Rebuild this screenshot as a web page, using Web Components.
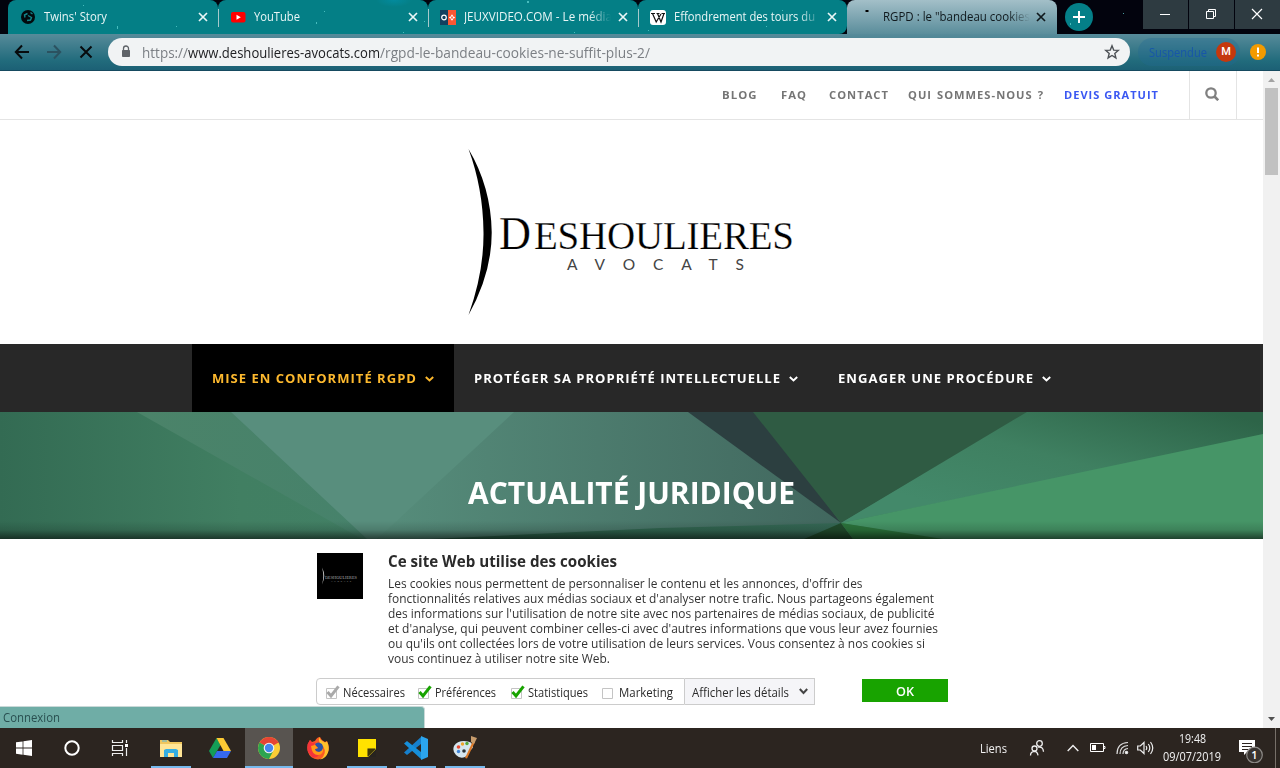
<!DOCTYPE html>
<html lang="fr">
<head>
<meta charset="utf-8">
<title>RGPD : le "bandeau cookies"</title>
<style>
html,body{margin:0;padding:0;height:768px;overflow:hidden;background:#fff;font-family:"Open Sans","Noto Sans",sans-serif}
</style>
</head>
<body>
<desktop-screen></desktop-screen>
<script>
const define = (name, html, setup) => {
  const tpl = document.createElement('template');
  tpl.innerHTML = html;
  customElements.define(name, class extends HTMLElement {
    connectedCallback() {
      if (this.shadowRoot) return;
      this.attachShadow({mode: 'open'}).append(tpl.content.cloneNode(true));
      if (setup) setup(this, this.shadowRoot);
    }
  });
};

/* Single line of text condensed or expanded to the width in its "w" attribute */
define('fit-text', `<style>
:host{display:inline-block;white-space:nowrap;flex:none}
span{display:inline-block;transform-origin:0 50%}
</style><span><slot></slot></span>`, (el, root) => {
  const w = +el.getAttribute('w'), s = root.querySelector('span');
  el.style.width = w + 'px';
  const n = s.offsetWidth ? s.getBoundingClientRect().width : 0;
  if (n) s.style.transform = `scaleX(${w / n})`;
});

define('browser-tab', `<style>
:host{display:flex;box-sizing:border-box;height:34px;width:210px;align-items:center;background:#047f86;color:#e9f6f6;border-radius:8px 8px 0 0;padding:0 10px 0 13px;font-size:12px;position:relative;overflow:hidden}
:host([last]){border-radius:8px 8px 8px 0}
:host([active]){background:linear-gradient(#a3bfc8,#5a8d9b);color:#10191d;border-radius:8px 8px 0 0;padding-right:11px}
.i{display:block;width:16px;height:16px;flex:none;margin-right:7px}
.t{flex:1;width:0;overflow:hidden;line-height:20px;height:20px}
:host([long]) .t{-webkit-mask:linear-gradient(90deg,#000 125px,transparent 147px)}
:host([sep])::before{content:"";position:absolute;left:0;top:9px;width:1px;height:18px;background:#a6c9cc}
svg.x{width:10px;height:10px;flex:none}
</style><slot class="i" name="icon"></slot><div class="t"><slot></slot></div>
<svg class="x" viewBox="0 0 10 10"><path d="M1 1l8 8M9 1l-8 8" stroke="currentColor" stroke-width="1.7"/></svg>`);

define('window-controls', `<style>
:host{display:flex;gap:1px;height:29px;margin-left:auto;align-self:flex-start}
div{width:45px;background:#2e3b41;display:grid;place-items:center}
svg{width:12px;height:12px;fill:none;stroke:#fff;margin:-1px 0 0 -1px}
</style><div><svg viewBox="0 0 12 12"><path d="M1 6.500h10"/></svg></div>
<div><svg viewBox="0 0 12 12"><path d="M1.500 3.500h7v7h-7zM3.500 3.500v-2h7v7h-2"/></svg></div>
<div><svg viewBox="0 0 12 12"><path d="M1 1l10 10M11 1L1 11" stroke-width="1.200"/></svg></div>`);

define('tab-strip', `<style>
:host{display:flex;height:34px;background:#02030d;padding-left:8px;position:relative}
svg{display:block;width:16px;height:16px}
svg.plus{width:28px;height:28px;margin:3px 0 0 8px;flex:none}
svg.stars{position:absolute;left:0;top:0;width:1280px;height:34px;pointer-events:none}
browser-tab{flex:none}
</style>
<browser-tab><svg slot="icon" viewBox="0 0 16 16"><circle cx="7" cy="8" r="7" fill="#020a0d"/><path d="M4 8.500L3.500 6 6.500 4.500M7 6.500l3.500 2-1 2.500-3.500.5M9.500 3.500l2 1.500" fill="none" stroke="#12858a" stroke-width="1.400"/></svg><fit-text w="63">Twins' Story</fit-text></browser-tab>
<browser-tab sep><svg slot="icon" viewBox="0 0 16 16"><rect y="3" width="14.500" height="10.500" rx="2" fill="#f00"/><path d="M5.500 5.800l4.300 2.500-4.300 2.500z" fill="#fff"/></svg><fit-text w="46">YouTube</fit-text></browser-tab>
<browser-tab sep long><svg slot="icon" viewBox="0 0 16 16" style="overflow:visible"><path d="M-1 1h8v15h-8z" fill="#12405f"/><path d="M7 1h8v15H7z" fill="#fa5733"/><circle cx="3" cy="8.500" r="2.300" fill="none" stroke="#fff" stroke-width="1.200"/><path d="M11 5.300l1.200 1.600-1.200 1-1.200-1zM11 9l1.200 1.200L11 11.800l-1.200-1.600zM7.900 8.500l1.500-1.200 1 1.200-1 1.200zM11.600 8.500l1-1.200 1.500 1.200-1.500 1.200z" fill="#fff"/></svg><fit-text w="148">JEUXVIDEO.COM - Le média</fit-text></browser-tab>
<browser-tab sep long last style="width:209px"><svg slot="icon" viewBox="0 0 16 16" style="overflow:visible"><rect y="1" x="-1" width="16" height="15" rx="3" fill="#fff"/><path d="M0 4.500h4M5.500 4.500h3M10.500 4.500h3.500M1.500 4.500l3.700 8.500L10 5M6.500 4.500l3.500 8.500L13 4.500" fill="none" stroke="#111" stroke-width="1.200"/></svg><fit-text w="141">Effondrement des tours du</fit-text></browser-tab>
<browser-tab active long><svg slot="icon" viewBox="0 0 16 16"><path d="M5.500 1h3v2h-3z" fill="#000"/></svg><fit-text w="147">RGPD : le "bandeau cookies</fit-text></browser-tab>
<svg class="plus" viewBox="0 0 28 28"><circle cx="14" cy="14" r="14" fill="#047f88"/><path d="M14 8v12M8 14h12" stroke="#fff" stroke-width="2"/></svg>
<window-controls></window-controls>
<svg class="stars" viewBox="0 0 1280 34"><defs><radialGradient id="g"><stop offset="0" stop-color="#00a0c8" stop-opacity=".35"/><stop offset="1" stop-color="#00a0c8" stop-opacity="0"/></radialGradient></defs><g fill="#5ed0cf" opacity=".75"><path d="M117 26h1v3h-1zM176 26h1v1h-1zM83 5h1v1h-1zM316 22h1v2h-1zM324 11h1v1h-1zM403 32h1v1h-1zM424 21h1v1h-1zM527 1h2v2h-2zM574 32h1v1h-1zM782 10h1v1h-1zM766 26h1v1h-1zM648 30h1v1h-1zM1070 23h1v2h-1zM1123 13h1v1h-1z"/></g><ellipse cx="394" cy="0" rx="18" ry="7" fill="url(#g)"/></svg>`);

define('address-bar', `<style>
:host{display:flex;box-sizing:border-box;height:37px;background:linear-gradient(#578b9a,#216b7c 75%,#1c6075);border-bottom:1px solid #164a60;padding:4px 14px 0 14px;align-items:flex-start}
svg{display:block;flex:none}
.nav{display:flex;gap:16px;padding-top:6px}
.box{display:flex;align-items:center;box-sizing:border-box;height:28px;width:1022px;border-radius:14px;background:#f1f3f4;margin-left:14px;padding:0 10px 0 10px;font-size:14px;color:#7b7f84}
.box b{font-weight:400;color:#202124}
.star{margin-left:auto}
.sus{display:flex;align-items:center;height:28px;box-sizing:border-box;width:102px;margin-left:8px;border-radius:14px;background:rgba(35,105,145,.35);padding-left:11px;color:#1756a9;font-size:12.500px}
.av{width:20px;height:20px;border-radius:50%;background:#c5380d;color:#fff;font:500 11px/20px Roboto,sans-serif;text-align:center;margin-left:9px}
.w{margin:6px 0 0 10px}
</style>
<div class="nav"><svg width="16" height="16" viewBox="0 0 16 16" fill="none" stroke="#070b0d" stroke-width="2"><path d="M15 8H2M8 1.500L1.800 8 8 14.500"/></svg>
<svg width="16" height="16" viewBox="0 0 16 16" fill="none" stroke="#2b5260" stroke-width="2"><path d="M1 8h13M8 1.500L14.200 8 8 14.500"/></svg>
<svg width="16" height="16" viewBox="0 0 16 16" fill="none" stroke="#070b0d" stroke-width="2"><path d="M2.500 2.500l11 11M13.500 2.500l-11 11"/></svg></div>
<div class="box"><svg width="16" height="16" viewBox="0 0 16 16" style="margin-right:8px"><path d="M4.500 6.500h7v6h-7z" fill="#5f6368" stroke="#5f6368"/><path d="M5.500 7V4.500a2.500 2.500 0 015 0V7" fill="none" stroke="#5f6368" stroke-width="1.300"/></svg><fit-text w="46">https://</fit-text><fit-text w="192"><b>www.deshoulieres-avocats.com</b></fit-text><fit-text w="270">/rgpd-le-bandeau-cookies-ne-suffit-plus-2/</fit-text>
<svg class="star" width="16" height="16" viewBox="0 0 16 16"><path d="M8 1.800l1.700 4.300 4.600.3-3.500 3 1.100 4.500L8 11.500l-3.900 2.400 1.100-4.500-3.500-3 4.600-.3z" fill="none" stroke="#4d5156" stroke-width="1.400"/></svg></div>
<div class="sus"><fit-text w="58">Suspendue</fit-text><div class="av">M</div></div>
<svg class="w" width="16" height="16" viewBox="0 0 16 16"><circle cx="8" cy="8" r="8" fill="#f29a00"/><path d="M8 3.500v5.500M8 10.500v2" stroke="#fff" stroke-width="2"/></svg>`);

define('top-links', `<style>
:host{display:flex;box-sizing:border-box;height:49px;border-bottom:1px solid #e4e4e4;padding-right:26px;justify-content:flex-end;font-size:11px;font-weight:700;letter-spacing:1px;color:#757575;line-height:48px}
fit-text.n{color:#3a57f2}
.s{width:46px;border:solid #e4e4e4;border-width:0 1px;margin-left:30px;display:grid;place-items:center}
</style><fit-text w="35.500">BLOG</fit-text><fit-text w="26" style="margin-left:23.500px">FAQ</fit-text><fit-text w="60" style="margin-left:22px">CONTACT</fit-text><fit-text w="136" style="margin-left:19px;word-spacing:1px">QUI SOMMES-NOUS ?</fit-text><fit-text class="n" w="95" style="margin-left:20px">DEVIS GRATUIT</fit-text><div class="s"><svg style="margin:-2px 0 0 -2px" width="14" height="14" viewBox="0 0 14 14" fill="none" stroke="#808080" stroke-width="2.300"><circle cx="6" cy="6" r="4.700"/><path d="M9.500 9.500l3.700 3.700" stroke-width="2.600"/></svg></div>`);

define('firm-logo', `<style>:host{display:flex;justify-content:center;height:224px}svg{display:block}</style>
<svg width="1263" height="224" viewBox="0 120 1263 224"><path d="M468.500 149Q491 187 491.700 232Q492 273 468.500 315Q484 272 483.500 232Q483 188 468.500 149z"/>
<g font-family="Liberation Serif,serif" fill="#000" stroke="#fff" stroke-width=".25"><text x="499" y="248.500" font-size="46" textLength="32" lengthAdjust="spacingAndGlyphs">D</text><text x="534" y="248.500" font-size="39" textLength="260" lengthAdjust="spacing">ESHOULIERES</text></g>
<text x="567" y="270" font-family="Lato,sans-serif" font-size="15.500" fill="#444" textLength="177">AVOCATS</text></svg>`);

define('main-menu', `<style>
:host{display:flex;height:68px;background:#282828;padding-left:192px;font-size:13px;font-weight:700;letter-spacing:1px;color:#fff}
div{display:flex;align-items:center;padding:0 20px;gap:8px}
div.on{background:#000;color:#fdb92e}
svg{margin-top:1px}
</style>
<div class="on"><fit-text w="205">MISE EN CONFORMITÉ RGPD</fit-text><svg width="9" height="6" viewBox="0 0 9 6"><path d="M.8 1l3.700 3.500L8.200 1" fill="none" stroke="currentColor" stroke-width="1.900"/></svg></div>
<div><fit-text w="307">PROTÉGER SA PROPRIÉTÉ INTELLECTUELLE</fit-text><svg width="9" height="6" viewBox="0 0 9 6"><path d="M.8 1l3.700 3.500L8.200 1" fill="none" stroke="currentColor" stroke-width="1.900"/></svg></div>
<div><fit-text w="196">ENGAGER UNE PROCÉDURE</fit-text><svg width="9" height="6" viewBox="0 0 9 6"><path d="M.8 1l3.700 3.500L8.200 1" fill="none" stroke="currentColor" stroke-width="1.900"/></svg></div>`);

define('hero-banner', `<style>
:host{display:grid;height:127px;overflow:hidden}
svg,h1{grid-area:1/1}
svg{display:block;background:#3a735b}
h1{margin:0;z-index:1;text-align:center;font-size:30px;line-height:41px;padding-top:60px;color:#fff;font-weight:700}
</style><svg width="1263" height="127" viewBox="0 412 1263 127"><defs>
<linearGradient id="a"><stop offset="0" stop-color="#336b53"/><stop offset=".6" stop-color="#417f62"/><stop offset="1" stop-color="#428066"/></linearGradient>
<linearGradient id="b"><stop offset="0" stop-color="#568d7b"/><stop offset="1" stop-color="#41675e"/></linearGradient>
<linearGradient id="c" x1="0" y1="1" x2="1" y2="0"><stop offset=".2" stop-color="#43896a"/><stop offset=".55" stop-color="#3f8061"/><stop offset=".95" stop-color="#2d6448"/></linearGradient>
<linearGradient id="e"><stop offset="0" stop-color="#4b8369"/><stop offset="1" stop-color="#46826b"/></linearGradient>
<linearGradient id="f"><stop offset="0" stop-color="#2b634a"/><stop offset="1" stop-color="#356855"/></linearGradient>
<linearGradient id="s" x2="0" y2="1"><stop offset="0" stop-opacity="0"/><stop offset=".5" stop-opacity=".13"/><stop offset="1" stop-opacity=".56"/></linearGradient></defs>
<path d="M0 412h400v127H0z" fill="url(#a)"/><path d="M137 412h110l125 127h-10z" fill="url(#e)"/><path d="M231 412h300L377 539h-10z" fill="#588e7d"/>
<path d="M514 412h176l151 111-30 16H377z" fill="url(#b)"/><path d="M430 539l230-11 181-5v16z" fill="url(#f)"/>
<path d="M688 412h70l83 111z" fill="#2c3f40"/><path d="M753 412h276l-188 111z" fill="#2f5b43"/><path d="M1027 412h236v24L841 523z" fill="url(#c)"/>
<path d="M1263 434v105H935l-94-16z" fill="#469567"/><path d="M841 523l-37 16h49z" fill="#214b2c"/><path d="M841 523l12 16h90z" fill="#2b743b"/>
<path d="M0 521h1263v18H0z" fill="url(#s)"/></svg><h1><fit-text w="327">ACTUALITÉ JURIDIQUE</fit-text></h1>`);

define('check-option', `<style>
:host{display:flex;align-items:center;flex:none;gap:4px;font-size:12px;color:#2a2a2a}
svg{display:block;overflow:visible;color:#18a300}
:host([locked]) svg{color:#aaa}
:host([empty]) .k{display:none}
</style><svg width="13" height="13" viewBox="0 0 13 13"><path d="M.5 2.500h10v10h-10z" fill="#fff" stroke="#c4c4c4"/><path class="k" d="M1.500 6l3.500 4L12.500.3" fill="none" stroke="currentColor" stroke-width="3"/></svg><slot></slot>`);

define('cookie-banner', `<style>
:host{display:grid;box-sizing:border-box;height:189px;background:#fff;grid-template-columns:46px 560px;column-gap:24.500px;padding:14px 0 0 317px;align-content:start;color:#2a2a2a}
.l{display:block}
h2{margin:-1px 0 0;font-size:15.500px;line-height:18px;height:24px;font-weight:700}
p{margin:0;font-size:12.500px;line-height:15px;display:flex;flex-direction:column;align-items:flex-start;height:90px;color:#333}
p fit-text{height:15px}
.r{grid-column:1/3;display:flex;margin:12px 0 0 -1px;height:27px;font-size:12px}
.r>div{flex:none}
.o{display:flex;align-items:center;box-sizing:border-box;width:369px;border:1px solid #ccc;border-radius:4px 0 0 4px;padding:1px 0 0 9px}
.d{display:flex;align-items:center;box-sizing:border-box;width:130px;border:1px solid #ccc;background:#f5f5f8;padding:1px 0 0 7px;gap:10px;border-left-width:0}
.d svg{margin-top:-2px}
.ok{margin:1px 0 0 47px;width:86px;height:23px;background:#18a300;color:#fff;display:grid;place-items:center;font-weight:600}
.ok fit-text{margin-top:2px}
</style><svg class="l" width="46" height="46" viewBox="0 0 46 46"><path d="M0 0h46v46H0z"/><path d="M5 14.500q4.500 8 0 17 2.500-8 0-17z" fill="#bbb"/><text x="8" y="25.500" font-family="Liberation Serif,serif" font-size="5" fill="#aaa" textLength="32" lengthAdjust="spacingAndGlyphs">DESHOULIERES</text><text x="14" y="29" font-family="Lato,sans-serif" font-size="2.500" fill="#888" textLength="20">AVOCATS</text></svg>
<div><h2><fit-text w="229">Ce site Web utilise des cookies</fit-text></h2><p>
<fit-text w="474.500">Les cookies nous permettent de personnaliser le contenu et les annonces, d'offrir des</fit-text>
<fit-text w="546">fonctionnalités relatives aux médias sociaux et d'analyser notre trafic. Nous partageons également</fit-text>
<fit-text w="546.500">des informations sur l'utilisation de notre site avec nos partenaires de médias sociaux, de publicité</fit-text>
<fit-text w="550">et d'analyse, qui peuvent combiner celles-ci avec d'autres informations que vous leur avez fournies</fit-text>
<fit-text w="537">ou qu'ils ont collectées lors de votre utilisation de leurs services. Vous consentez à nos cookies si</fit-text>
<fit-text w="222">vous continuez à utiliser notre site Web.</fit-text></p></div>
<div class="r"><div class="o"><check-option locked><fit-text w="62">Nécessaires</fit-text></check-option><check-option style="margin-left:13px"><fit-text w="61">Préférences</fit-text></check-option><check-option style="margin-left:15px"><fit-text w="60">Statistiques</fit-text></check-option><check-option empty style="margin-left:14px"><fit-text w="54">Marketing</fit-text></check-option></div>
<div class="d"><fit-text w="97">Afficher les détails</fit-text><svg width="9" height="7" viewBox="0 0 9 7"><path d="M.8 1l3.700 4L8.200 1" fill="none" stroke="#444" stroke-width="2"/></svg></div><div class="ok"><fit-text w="18">OK</fit-text></div></div>`);

define('scroll-bar', `<style>
:host{display:flex;flex-direction:column;width:17px;background:#f1f1f1;align-items:center}
div{width:13px;height:87px;background:#c1c1c1}
svg{display:block;flex:none}svg:last-child{margin-top:auto}
</style><svg width="17" height="17"><path d="M5 11h7L8.500 7z" fill="#a3a3a3"/></svg><div></div><svg width="17" height="17"><path d="M5 6h7l-3.500 4z" fill="#505050"/></svg>`);

define('link-status', `<style>
:host{position:absolute;left:0;bottom:0;box-sizing:border-box;width:425px;height:22px;background:#6fada6;border:1px solid #c9d9d8;border-width:1px 1px 0 0;border-radius:0 4px 0 0;font-size:12px;line-height:21px;padding-left:3px;color:#294f50}
</style><fit-text w="57">Connexion</fit-text>`);

define('web-page', `<style>
:host{display:flex;height:657px;position:relative}
main{width:1263px;flex:none}
</style><main><top-links></top-links><firm-logo></firm-logo><main-menu></main-menu><hero-banner></hero-banner><cookie-banner></cookie-banner></main><scroll-bar></scroll-bar><link-status></link-status>`);

define('task-button', `<style>
:host{display:grid;place-items:center;width:49px;height:40px;box-sizing:border-box;position:relative;flex:none}
:host([run])::after{content:"";position:absolute;bottom:0;left:4px;width:40px;height:2px;background:#76b9ed}
:host([active]){background:#585450;width:48px;margin-right:1px}
:host([active])::after{left:0;width:48px}
</style><slot></slot>`);

define('system-tray', `<style>
:host{display:flex;align-items:center;margin-left:auto;color:#f2f2f2;font-size:12px;height:40px;box-sizing:border-box;width:300px}
svg{flex:none;display:block}
.t{display:flex;flex-direction:column;align-items:center;line-height:18px;width:58px;margin-left:9px;margin-top:-1px}
.e{width:1px;height:40px;background:#777069;margin-left:10px}
</style><fit-text w="27">Liens</fit-text>
<svg style="margin-left:22px" width="16" height="16" viewBox="0 0 16 16" fill="none" stroke="#eee" stroke-width="1.300"><circle cx="10.500" cy="3.500" r="2.800"/><circle cx="5.500" cy="8.500" r="2.500"/><path d="M1.500 15.500q0-4 4-4.200 3 .2 3.500 4M9 7.200q5-1 5.500 4.500"/></svg>
<svg style="margin-left:22px" width="12" height="8" viewBox="0 0 12 8"><path d="M.7 7L6 1.500 11.300 7" fill="none" stroke="#eee" stroke-width="1.400"/></svg>
<svg style="margin-left:11px" width="16" height="10" viewBox="0 0 16 10"><path d="M.5.5h13v8H.5zM14 3.500h1v2h-1" fill="none" stroke="#fff"/><path d="M2 2h4v5H2z" fill="#fff"/></svg>
<svg style="margin-left:10px" width="13" height="14" viewBox="0 0 13 14" fill="none" stroke="#ddd" stroke-width="1.200"><path d="M1 13Q1 2 12 1.500M4 13Q4 5 12 4.500M7 13q0-5 5-5.500"/><circle cx="10.500" cy="11.500" r="1.200" fill="#fff"/></svg>
<svg style="margin-left:8px" width="17" height="14" viewBox="0 0 17 14" fill="none" stroke="#eee" stroke-width="1.200"><path d="M.7 5v4h2.600L7 12.500v-11L3.300 5zM9 5q1.500 2 0 4M11.300 3q3 4 0 8M13.500 1q4.500 6 0 12"/></svg>
<div class="t"><fit-text w="27">19:48</fit-text><fit-text w="58">09/07/2019</fit-text></div>
<svg style="margin-left:17px" width="27" height="30" viewBox="0 0 27 30"><path d="M1 7h16v12h-8l-3 3v-3H1z" fill="#fff"/><path d="M4 10.500h10M4 13.500h10M4 16.500h6" stroke="#2c2420" stroke-width="1.200"/><circle cx="16.500" cy="22" r="7.800" fill="#38332f" stroke="#8d8a87" stroke-width="1.200"/><text x="16.500" y="25.800" text-anchor="middle" font-family="Open Sans,sans-serif" font-size="11" font-weight="600" fill="#fff">1</text></svg><div class="e"></div>`);

define('task-bar', `<style>
:host{display:flex;height:40px;background:#2c2520}svg{display:block}
</style>
<task-button style="width:48px"><svg width="16" height="16" viewBox="0 0 16 16" fill="#fff"><path d="M0 2.300L6.600 1.400v6.200H0zM7.400 1.300L16 0v7.600H7.400zM0 8.400h6.600v6.300L0 13.800zM7.400 8.400H16V16l-8.600-1.200z"/></svg></task-button>
<task-button style="width:48px"><svg width="16" height="16"><circle cx="8" cy="8" r="6.700" fill="none" stroke="#fff" stroke-width="2"/></svg></task-button>
<task-button style="width:51px"><svg style="margin-left:-3px" width="18" height="16" viewBox="0 0 18 16" fill="none" stroke="#eee" stroke-width="1.200"><path d="M1.500 0v2.500h10V0M1.500 5.500h10v5h-10zM1.500 16v-2.500h10V16M15.500 0v3M15.500 8v8"/><path d="M14 4h3v3h-3z" fill="#fff" stroke="none"/></svg></task-button>
<task-button run><svg style="margin-left:-1px" width="22" height="19" viewBox="0 0 22 19"><path d="M0 1h8l2 2h12v15H0z" fill="#f0c65e"/><path d="M0 5h22v13H0z" fill="#ffe596"/><path d="M2 1.500h5v1H2z" fill="#57b4d8"/><path d="M4 18v-7l2-1h10l2 1v7h-4v-4H8v4z" fill="#35aee3"/></svg></task-button>
<task-button><svg style="margin-left:-2px" width="22" height="20" viewBox="0 0 22 20"><path d="M7.500 0L0 13l4 7L11.500 7z" fill="#149d57"/><path d="M7.500 0h7L22 13h-7.500z" fill="#fcc934"/><path d="M8 13h14l-4 7H4z" fill="#3569ee"/></svg></task-button>
<task-button active run><svg width="22" height="22" viewBox="0 0 22 22"><circle cx="11" cy="11" r="11" fill="#fbcd35"/><path d="M11 11L1.500 5.500A11 11 0 0120.500 5.500z" fill="#e54435"/><path d="M1.500 5.500A11 11 0 0011 22l4.500-8.500L11 11z" fill="#2da450"/><path d="M11 6h9.800a11 11 0 00-.6-1.200L11 4z" fill="#e54435"/><circle cx="11" cy="11" r="5.300" fill="#f3f3f3"/><circle cx="11" cy="11" r="4.200" fill="#4486ee"/></svg></task-button>
<task-button><svg width="23" height="23" viewBox="0 0 23 23"><path d="M3 3l2 2 3-1q2-4 5-4 1 3 5 5l2-1q3 6 1 11-3 7-10 7.500Q3 22 1 15-1 8 3 3z" fill="#fb5a24"/><path d="M12 0q1 3 6 5.500l2-1q3 6 1 11-2 6-8 7Q21 17 16 9q-5-3-4-9z" fill="#ffc02b"/><path d="M1 15Q-1 8 3 3l2 3 4-1-3 4 2 4-3 1q3 4 8 2-3 6-8 4z" fill="#f4343a"/><path d="M8 7q3-3 7 0 3 6-2 8-5 0-5-3l3-1-2-2z" fill="#2a53a5"/><path d="M4 9l4-1 3 3-3 1q0 3 4 3 4-1 4-5 1 8-5 8-6 0-7-9z" fill="#ff9b16"/></svg></task-button>
<task-button run><svg style="margin-left:-1px" width="18" height="18" viewBox="0 0 18 18"><path d="M0 0h18v18H0z" fill="#ffe200"/><path d="M9.500 9.500H18L9.500 18z" fill="#27231f"/><path d="M18 10v8h-8z" fill="#27231f"/><path d="M18 0v9.500h-1V0zM0 17h9.500v1H0z" fill="#ffe200"/><path d="M10 10h6.500L10 16.500z" fill="#3d3705"/></svg></task-button>
<task-button run><svg style="margin-left:-1px" width="24" height="24" viewBox="0 0 24 24"><path d="M17 0l7 3v18l-7 3z" fill="#2ba5ee"/><path d="M17 1v7L3 19l-3-2.500z" fill="#1680cd"/><path d="M17 23v-7L3 5 0 7.500z" fill="#168fda"/></svg></task-button>
<task-button run><svg style="margin-left:-1px" width="24" height="24" viewBox="0 0 24 24"><path d="M11 5q9 0 9 6-1 3-4 3 1 4-4 7-5 2-9-2T1 10q3-5 10-5z" fill="#d6e6ef"/><circle cx="5.500" cy="11" r="1.800" fill="#e84a32"/><circle cx="9.500" cy="8" r="1.700" fill="#f1a52b"/><circle cx="14" cy="7.500" r="1.700" fill="#55aa3c"/><circle cx="5.500" cy="15.500" r="1.700" fill="#3f84d8"/><circle cx="11" cy="15" r="1.800" fill="#2b3135"/><path d="M20 5l-8 17 2 .5L22 6z" fill="#dd7a29"/><path d="M18 0l6 2-3 6-3-2z" fill="#c79c6c"/></svg></task-button>
<system-tray></system-tray>`);

define('desktop-screen', `<style>:host{display:flex;flex-direction:column;width:1280px;height:768px}</style>
<tab-strip></tab-strip><address-bar></address-bar><web-page></web-page><task-bar></task-bar>`);
</script>
</body>
</html>
